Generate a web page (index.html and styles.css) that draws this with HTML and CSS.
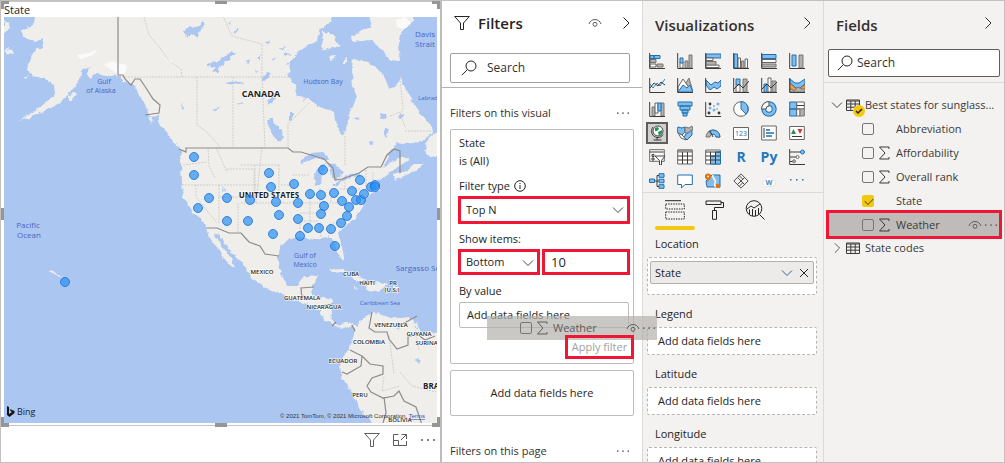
FILE: index.html
```html
<!DOCTYPE html>
<html lang="en">
<head>
<meta charset="utf-8">
<title>Report editor</title>
<link rel="stylesheet" href="styles.css">
</head>
<body>
<svg class="defs" aria-hidden="true">
  <symbol id="funnel" viewBox="0 0 16 16"><path d="M.7 1.500h14.600L9.500 8v6.500h-3V8z"/></symbol>
  <symbol id="eye" viewBox="0 0 14 10"><path d="M1 6C2 3 4.300 1.500 7 1.500S12 3 13 6"/><circle cx="7" cy="6.300" r="2"/></symbol>
  <symbol id="right" viewBox="0 0 8 14"><path d="M1.500 1.500 7 7l-5.500 5.500"/></symbol>
  <symbol id="down" viewBox="0 0 12 8"><path d="M1 1.500 6 6.500l5-5"/></symbol>
  <symbol id="search" viewBox="0 0 16 16"><circle cx="10" cy="6" r="5"/><path d="M6.300 9.700.8 15.200"/></symbol>
  <symbol id="sigma" viewBox="0 0 12 14"><path d="M11 3V1H1.500l5.500 6-5.500 6H11v-2"/></symbol>
  <symbol id="dots" viewBox="0 0 16 4"><g fill="currentColor" stroke="none"><circle cx="2" cy="2" r="1"/><circle cx="8" cy="2" r="1"/><circle cx="14" cy="2" r="1"/></g></symbol>
  <symbol id="table" viewBox="0 0 14 12"><path d="M.5 1h13v10.500H.5zM.5 2h13M.5 5h13M.5 8.200h13M4.800 2v9.500M9.200 2v9.500"/></symbol>
</svg>

<div class="app">
  <main class="canvas">
    <section class="visual">
      <h1 class="visual-title">State</h1>
      <svg class="map" viewBox="4 17 433 406" preserveAspectRatio="xMidYMid slice" role="img" aria-label="Map of states">
        <defs>
          <filter id="rough" x="-5%" y="-5%" width="110%" height="110%">
            <feTurbulence type="fractalNoise" baseFrequency=".18" numOctaves="3" seed="4" result="n"/>
            <feDisplacementMap in="SourceGraphic" in2="n" scale="5" xChannelSelector="R" yChannelSelector="G"/>
          </filter>
        </defs>
        <rect class="sea" x="4" y="17" width="433" height="406"/>
        <g class="land" filter="url(#rough)">
          <path d="M38 0 34 24 21 31 24 38 35 42 44 39 42 47 35 50 30 58 28 64 27 70 33 76 43 78 50 82 54 86 55 94 44 104 30 114 20 120 29 117 43 112 58 104 68 96 71 90 80 80 81 71 90 67 86 74 90 78 97 73 105 75 118 76 124 81 134 86 140 97 146 106 150 117 158 116 161 126 167 132 172 139 180 144 184 149 181 154 181 165 182 183 183 197 188 206 193 213 202 219 207 228 210 238 216 247 221 255 232 267 235 267 231 258 225 250 219 243 213 233 219 235 225 243 231 252 243 263 250 277 263 287 280 293 295 300 312 306 320 310 323 318 335 327 348 328 353 325 355 330 353 337 348 350 343 357 340 367 342 377 352 393 360 410 367 417 378 430 460 430 460 334 420 332 417 323 410 318 400 319 387 317 377 313 373 312 363 318 358 325 353 323 345 322 337 325 332 318 330 307 333 300 323 298 312 295 313 287 318 275 303 277 297 285 287 285 281 274 278 257 280 247 290 238 307 238 313 240 327 237 333 240 338 253 342 261 344 257 341 240 338 233 347 225 357 217 362 208 363 202 372 193 380 189 379 181 385 176 393 170 401 165 410 159 403 157 389 163 383 168 388 156 396 143 405 144 420 142 433 133 432 127 423 117 413 102 406 90 401 78 395 87 389 89 383 74 370 63 353 58 352 70 353 87 357 97 350 110 348 123 343 135 337 126 335 112 320 107 307 98 298 97 295 85 289 77 290 63 300 50 317 40 320 30 330 23 336 0z"/>
          <path d="M372 0 370 27 352 36 353 42 370 40 383 50 389 60 400 61 398 45 400 35 412 22 412 0z"/>
          <path d="M322 50 323 30 333 36 341 48 331 47 324 51zM329 57l7-3-1 5-5 2zM344 60l2-1v5h-2zM4 20l5 2 1 7-6 4zM5 49l8 1 2 4-8-1zM22 76l6 0-2 3zM68 97l6-5 3 3-5 5-4 0zM148 118l5-1-1 7zM167 134l8 3 8 10 2 5-10-8zM394 175l12-4 9-8 8 0-6 7-17 8-5 2zM425 150l3-11 8-6 8 0 0 23-12 0-5-1zM48 271l6 1 9 5-1 1-13-6zM328 270l12-2 15 6 11 7-9 0-13-8-12-1zM367 285l10-3 10 3-9 7-12-1zM352 287l7 1-6 1zM393 287l6 0v2h-6z"/>
        </g>
        <g class="water" filter="url(#rough)">
          <path d="M183 31l7-5 6 2 7-6 3 2-6 6-2 7-6-3-6 4-1-4zM207 64l8-2 10-6 6-5 4 2-6 7-7 5-5 7-4 1 3-6-9-1zM267 120l5-3 3 6 7 8 1 8-6 3-6-10zM290 113l3 0 0 6-3 3zM225 83l12-2 7 2-12 2zM180 102l5 6-1 3zM300 162l11-9 12-1 7 7-7 1-7-2-8 3-6 2zM314 174l5-8 6-2-3 8-1 13-6 1zM326 163l9 1 8 8-6 7-5-1-1-8zM332 186l14-10 2 1-12 9zM347 176l12-3 1 3-11 2zM380 113l5 1 1 4-5 1zM385 129l4 1-3 8-2-4zM353 118l7-1-2 3zM398 116l6-1-3 4zM370 141l5 1-4 3zM262 80l6-8 2 1-5 8zM270 98l7-5-4 8-6 5zM305 97l2 1-3 3zM338 104l5-2-1 4zM222 187l3 3-1 3zM415 358l4 2 1 4-4-2zM414 317l1 8 3 6-3-3zM395 328l6-1-3 4zM256 58l5-4-2 6zM279 47l7 1-5 3zM284 54l7-1-5 3zM233 30l5-1-4 5zM211 110l8-2-3 3zM237 104l6-2-3 3zM250 97l3-3-1 4zM266 42l4-3-2 6zM272 58l4-1-3 4zM255 70l4 1-3 2zM286 64l4-2-2 4zM246 62l4-3-1 4zM227 24l4-2-2 4z"/>
        </g>
        <path class="snow" d="M104 65l8-4 6 2 9 2-2 9-7 1-6-5zM396 20l9-3 6 6-7 6-7-2zM77 55l12-2 9-4-5 6-12 4zM165 58l6 2 2 4-5-3z"/>
        <g class="borders">
          <path class="admin" d="M119 77h170M144 17l5 18 12 14 8 12 12 8 1 8M197 77v48l9 6 14 16M233 77v70M262 77l3 70M262 77V44l-30-8-9-20M288 147v-23l22-22M345 136v30M400 78l3 30-3 7M390 116l10-4 5 15M405 131h27M183 165l24-3M208 147l1 19 6 12M182 185h78M196 185v12l21 26M219 185v38M241 165h38M255 165v38M238 203v30M216 147l5 12 6 13M227 169h27v28h-36M241 203h38M279 165v38h17M262 147l-6 56M281 185h15M292 175h18M296 203h42M300 213h20M310 189v36M320 188v20M331 188v15M331 223l-3 16M320 223l1 14M300 238v-17h18M333 223h14M340 189h20M345 176v13M366 170v22M373 172v13M389 336l5 38M400 372l12 14 24 6M415 330l4 20M384 377l-2 14 18-5"/>
          <path class="state" d="M118 17v58l5 0 2 4 6 6 4-6h5l8 12 5 8 7 6-1 8-14 2M179 149l7 3v-4h102l5 4 8 0 10 3 13 4 9 9 2 12 7-1 17-6 9-6h13l6-12 7-6 6 2 0 22M207 228l10 0 12 5h12l8 9 11 4 5 8 14 2M302 300l-1-12 13-1M301 295l10 4M313 307l20-3M332 326l4-4M355 331l-3-6M372 312l-3 16 6 4 12 0 2 7 8 10 11-4 0-8 9-3 8 6 10-4M399 326l18-10M350 350l12 6-1 10-14 8-5-2M362 356l8 8 13 2 0 8-11 4-5 8 4 6 12 6 11-2 5-5 5 10 12 6 4 12 4 12M384 397l2 16-3 10"/>
        </g>
        <g class="sea-label">
          <text x="104" y="84">Gulf</text><text x="101" y="93">of Alaska</text>
          <text x="323" y="84">Hudson Bay</text><text x="425" y="37" class="wide">Davis</text><text x="425" y="47" class="wide">Strait</text>
          <text x="431" y="100" class="tiny">Labrador</text>
          <text x="28" y="228" class="wide">Pacific</text><text x="29" y="238" class="wide">Ocean</text>
          <text x="305" y="258">Gulf of</text><text x="305" y="267">Mexico</text>
          <text x="420" y="271" class="wide">Sargasso Sea</text><text x="380" y="305" class="tiny">Caribbean Sea</text>
        </g>
        <g class="country">
          <text x="261" y="97" class="large">CANADA</text><text x="269" y="198">UNITED STATES</text>
          <text x="262" y="274" class="small">MEXICO</text><text x="351" y="276" class="small">CUBA</text>
          <text x="367" y="285" class="small">HAITI</text><text x="393" y="285" class="small">PR</text><text x="392" y="292" class="small">(U.S.)</text>
          <text x="302" y="300" class="small">GUATEMALA</text><text x="324" y="309" class="small">NICARAGUA</text>
          <text x="391" y="327" class="small">VENEZUELA</text><text x="419" y="336" class="small">GUYANA</text>
          <text x="431" y="345" class="small">SURINAME</text><text x="369" y="344" class="small">COLOMBIA</text>
          <text x="343" y="363" class="small">ECUADOR</text><text x="437" y="389">BRAZIL</text>
          <text x="360" y="397" class="small">PERU</text><text x="400" y="422" class="small">BOLIVIA</text>
        </g>
        <g class="points">
          <circle cx="194" cy="157" r="4.500"/><circle cx="194" cy="175" r="4.500"/><circle cx="209" cy="198" r="4.500"/><circle cx="198" cy="208" r="4.500"/><circle cx="227" cy="198" r="4.500"/><circle cx="250" cy="200" r="4.500"/><circle cx="227" cy="221" r="4.500"/><circle cx="248" cy="221" r="4.500"/><circle cx="269" cy="173" r="4.500"/><circle cx="271" cy="187" r="4.500"/><circle cx="276" cy="202" r="4.500"/><circle cx="279" cy="215" r="4.500"/><circle cx="273" cy="234" r="4.500"/><circle cx="294" cy="184" r="4.500"/><circle cx="298" cy="203" r="4.500"/><circle cx="298" cy="219" r="4.500"/><circle cx="300" cy="236" r="4.500"/><circle cx="310" cy="194" r="4.500"/><circle cx="321" cy="195" r="4.500"/><circle cx="323" cy="170" r="4.500"/><circle cx="324" cy="206" r="4.500"/><circle cx="321" cy="214" r="4.500"/><circle cx="308" cy="228" r="4.500"/><circle cx="319" cy="228" r="4.500"/><circle cx="331" cy="229" r="4.500"/><circle cx="335" cy="246" r="4.500"/><circle cx="334" cy="193" r="4.500"/><circle cx="342" cy="201" r="4.500"/><circle cx="341" cy="223" r="4.500"/><circle cx="347" cy="216" r="4.500"/><circle cx="349" cy="207" r="4.500"/><circle cx="352" cy="191" r="4.500"/><circle cx="356" cy="200" r="4.500"/><circle cx="361" cy="200" r="4.500"/><circle cx="364" cy="194" r="4.500"/><circle cx="360" cy="180" r="4.500"/><circle cx="371" cy="187" r="4.500"/><circle cx="375" cy="185" r="4.500"/><circle cx="375" cy="187" r="4.500"/><circle cx="65" cy="282" r="4.500"/>
        </g>
        <path class="bing-mark" d="M7 406l2 1v7l3-2-1.500-1-1-2 5 2v2l-5 4-2.500-2z"/>
        <text class="bing" x="17" y="415">Bing</text>
        <text class="credit" x="280" y="418">© 2021 TomTom, © 2021 Microsoft Corporation, <tspan class="terms">Terms</tspan></text>
      </svg>
      <i class="grip top left"></i><i class="grip top mid"></i><i class="grip top right"></i>
      <i class="grip side left"></i><i class="grip side right"></i>
      <i class="grip bottom left"></i><i class="grip bottom mid"></i><i class="grip bottom right"></i>
    </section>
    <div class="visual-tools">
      <button class="icon-btn" aria-label="Filters"><svg class="i16"><use href="#funnel"/></svg></button>
      <button class="icon-btn" aria-label="Focus mode"><svg class="i16" viewBox="0 0 16 16"><path d="M6.500 2.500h-5v11h13V9M1.500 8.500h5v5M9.500 2.500h5V7M14.500 2.500 9 8"/></svg></button>
      <button class="icon-btn" aria-label="More options"><svg class="more"><use href="#dots"/></svg></button>
    </div>
  </main>

  <aside class="filters">
    <header class="filters-head">
      <svg class="i16"><use href="#funnel"/></svg>
      <h2>Filters</h2>
      <button class="icon-btn" aria-label="Show or hide"><svg class="eye"><use href="#eye"/></svg></button>
      <button class="icon-btn" aria-label="Collapse filters"><svg class="chev-r"><use href="#right"/></svg></button>
    </header>
    <label class="search"><svg class="i16"><use href="#search"/></svg><input type="text" placeholder="Search" aria-label="Search filters"></label>
    <div class="filters-body">
      <div class="section-head"><h3>Filters on this visual</h3><button class="icon-btn" aria-label="More"><svg class="dots"><use href="#dots"/></svg></button></div>
      <div class="card">
        <div class="card-title">State<br>is (All)</div>
        <label class="row-label" for="ftype">Filter type <svg class="info" viewBox="0 0 12 12"><circle cx="6" cy="6" r="5.300"/><path d="M6 5v4M6 3v1"/></svg></label>
        <div class="marked pick"><select id="ftype"><option>Top N</option></select><svg class="chev-d"><use href="#down"/></svg></div>
        <label class="row-label" for="show">Show items:</label>
        <div class="pair">
          <div class="marked pick"><select id="show"><option>Bottom</option></select><svg class="chev-d"><use href="#down"/></svg></div>
          <div class="marked"><input type="text" value="10" aria-label="Number of items"></div>
        </div>
        <div class="row-label">By value</div>
        <div class="drop">Add data fields here</div>
        <div class="marked apply"><button disabled>Apply filter</button></div>
      </div>
      <div class="card empty">Add data fields here</div>
      <div class="section-head next"><h3>Filters on this page</h3><button class="icon-btn" aria-label="More"><svg class="dots"><use href="#dots"/></svg></button></div>
    </div>
  </aside>

  <aside class="vis">
    <header class="pane-head"><h2>Visualizations</h2><button class="icon-btn" aria-label="Collapse visualizations"><svg class="chev-r"><use href="#right"/></svg></button></header>
    <div class="gallery">
      <button aria-label="Stacked bar"><svg viewBox="0 0 16 16"><path class="b" d="M1 2.500h4v3H1zM5 2.500h6v3H5z"/><path class="g" d="M1 6.500h6v3H1zM8 11h6v3H8z"/><path class="w" d="M1 11h6v3H1z"/><path class="k" d="M.7 0v15.500H16"/></svg></button>
      <button aria-label="Stacked column"><svg viewBox="0 0 16 16"><path class="w" d="M3 9h3v6H3z"/><path class="b" d="M3 5h3v5H3z"/><path class="g" d="M8 8h3v7H8zM12 2h3v13h-3z"/><path class="k" d="M.7 0v15.500H16"/></svg></button>
      <button aria-label="Clustered bar"><svg viewBox="0 0 16 16"><path class="b" d="M1 1h15v4H1z"/><path class="w" d="M1 5h7v2.500H1zM1 12h13v2.500H1z"/><path class="g" d="M1 8.500h10V12H1z"/><path class="k" d="M.7 0v15.500H16"/></svg></button>
      <button aria-label="Clustered column"><svg viewBox="0 0 16 16"><path class="b" d="M1 1h3.500v14H1z"/><path class="w" d="M5 5h2.500v10H5zM12 6h2.500v9H12z"/><path class="g" d="M8.500 8H11v7H8.500z"/><path class="k" d="M.7 0v15.500H16"/></svg></button>
      <button aria-label="100% stacked bar"><svg viewBox="0 0 16 16"><path class="b" d="M1 1.500h14v4H1z"/><path class="w" d="M1 6.500h14v3H1z"/><path class="g" d="M1 11h14v3H1z"/><path class="k" d="M.7 0v15.500H16"/></svg></button>
      <button aria-label="100% stacked column"><svg viewBox="0 0 16 16"><path class="b" d="M3 2h4v11H3z"/><path class="g" d="M10 2h4v13h-4z"/><path class="k" d="M.7 0v15.500H16"/></svg></button>

      <button aria-label="Line"><svg viewBox="0 0 16 16"><path class="bl" d="M1 7l3 4 4-5 3 3 5-7"/><path class="k" d="M1 11l4-5 4 3 3-4 4 3M.7 1v14.500H16"/></svg></button>
      <button aria-label="Area"><svg viewBox="0 0 16 16"><path class="g" d="M7 9l5-8 4 14H9z"/><path class="w" d="M1 10l5-8 9 13H1z"/><path class="b" d="M1 15l5-7 4 3 3-3 3 7z"/><path class="k" d="M.7 1v14.500H16"/></svg></button>
      <button aria-label="Stacked area"><svg viewBox="0 0 16 16"><path class="b" d="M1 3l5 5 4-3 3 1 3-3v6l-4 3-3-2-4 3-4-5z"/><path class="k" d="M.7 1v14.500H16"/></svg></button>
      <button aria-label="Line and stacked column"><svg viewBox="0 0 16 16"><path class="b" d="M3 2h4v6H3z"/><path class="w" d="M3 8h4v7H3z"/><path class="g" d="M10 2h4v13h-4z"/><path class="k" d="M1 12l5-5 4 4 6-7M.7 1v14.500H16"/></svg></button>
      <button aria-label="Line and clustered column"><svg viewBox="0 0 16 16"><path class="b" d="M3 7h3v8H3z"/><path class="w" d="M7 1h3v14H7z"/><path class="g" d="M11 4h4v11h-4z"/><path class="k" d="M1 12l5-5 4 4 6-6M.7 1v14.500H16"/></svg></button>
      <button aria-label="Ribbon"><svg viewBox="0 0 16 16"><path class="o" d="M1 7h3l4 6h3l4-5h1v6H1z"/><path class="b" d="M1 2l5 4h4l6-4v5l-5 4H7L1 6z"/><path class="g" d="M1 11l4 3 4-4 3 2 4 0v3H1z"/><path class="k" d="M.7 1v14.500H16"/></svg></button>

      <button aria-label="Waterfall"><svg viewBox="0 0 16 16"><path class="g" d="M3 6h3v9H3zM12 2h3v13h-3z"/><path class="w" d="M6 2h3v10H6z"/><path class="b" d="M9 2h3v8H9z"/><path class="k" d="M.7 1v14.500H16"/></svg></button>
      <button aria-label="Funnel"><svg viewBox="0 0 16 16"><path class="b" d="M1 1h14v4H1zM3 5h10v4H3zM5 9h6v3H5zM6 12h4v3H6z"/></svg></button>
      <button aria-label="Scatter"><svg viewBox="0 0 16 16"><g fill="#71b1e6"><circle cx="5" cy="7" r="1.500"/><circle cx="9" cy="9" r="1.500"/><circle cx="13" cy="3" r="1.500"/></g><g fill="#3b3a39"><circle cx="5" cy="3" r="1.400"/><circle cx="4" cy="12" r="1.400"/><circle cx="14" cy="12" r="1.400"/></g><g fill="#aaa"><circle cx="9" cy="5" r="1"/><circle cx="12" cy="8" r="1"/></g><path class="k" d="M.7 1v14.500H16"/></svg></button>
      <button aria-label="Pie"><svg viewBox="0 0 16 16"><circle class="w" cx="8" cy="8" r="7.300"/><path class="b" d="M8 .7A7.300 7.300 0 0 1 13 13.200L8 8z"/></svg></button>
      <button aria-label="Donut"><svg viewBox="0 0 16 16"><circle cx="8" cy="8" r="5.200" fill="none" stroke="#1f70b0" stroke-width="5"/><circle cx="8" cy="8" r="5.200" fill="none" stroke="#83bdeb" stroke-width="3"/><path d="M8 .5A7.500 7.500 0 0 0 .5 8H5a3 3 0 0 1 3-3z" fill="#f8f8f8" stroke="#555"/></svg></button>
      <button aria-label="Treemap"><svg viewBox="0 0 16 16"><path class="b" d="M.7 1h7v7h-7zM.7 8h7v7h-7z"/><path class="w" d="M7.700 1h7.600v7H7.700zM7.700 8H11v7H7.700z"/><path class="g" d="M11 8h4.300v7H11z"/><path class="k" d="M8 4.500h7"/></svg></button>

      <button class="on" aria-label="Map"><svg viewBox="0 0 16 16"><path class="k" d="M4 2C1 6 3 12 8 12.500c3 .3 5-1 6-3M8 12.500V15M4.500 15h8"/><circle cx="9" cy="6" r="5" fill="#fff" stroke="#444"/><path d="M6 3l3-1 1 2-2 2-2 0zM9 7l4-2v3l-3 3z" fill="#189a55"/></svg></button>
      <button aria-label="Filled map"><svg viewBox="0 0 16 16"><path class="b" d="M1 2l4 1 3-1v5l-3 3-4-2-1-4zM9 9l6-4v5l-5 5-3-3z"/><path class="g" d="M8 2l4 1 3-2 1 3-5 4-3 0z"/><path class="w" d="M1 8l4 2 2 2 2 3-5-2z"/></svg></button>
      <button aria-label="Gauge"><svg viewBox="0 0 16 16"><path class="g" d="M1 12a7 7 0 0 1 14 0h-4a3 3 0 0 0-6 0z"/><path class="b" d="M4 6.300A7 7 0 0 1 15 12h-4a3 3 0 0 0-4-2.500z"/><path class="k" d="M8 12 5 6"/></svg></button>
      <button aria-label="Card"><svg viewBox="0 0 16 16"><path class="w" d="M.5 2.500h15v12H.5z"/><text x="2" y="11" class="num">123</text></svg></button>
      <button aria-label="Multi-row card"><svg viewBox="0 0 16 16"><path class="w" d="M.7 1h14.600v14H.7z"/><path class="k" d="M3 3v10"/><path d="M5 5h4M5 8h8M5 11h6" stroke="#1f70b0" stroke-width="1.500"/></svg></button>
      <button aria-label="KPI"><svg viewBox="0 0 16 16"><path class="w" d="M.7 1.500h14.600v13H.7z"/><path d="M2 9l2.500-5L7 9z" fill="#2d8a57"/><path d="M8.500 4h5L11 9z" fill="#d33"/><path class="k" d="M3 11.500h10"/></svg></button>

      <button aria-label="Slicer"><svg viewBox="0 0 16 16"><path class="w" d="M.7.700h14.600v11.600H.7z"/><path class="k" d="M.7 3h14M3 5.500h2v2H3zM3 9h2v2H3z"/><path d="M6 7h10l-3.500 4.500V16h-2v-4.500z" fill="#fff" stroke="#444"/></svg></button>
      <button aria-label="Table"><svg viewBox="0 0 16 16"><path class="w" d="M.7 1h14.600v14H.7z"/><path class="g" d="M.7 1h14.600v2H.7z"/><path class="k" d="M.7 7h14.600M.7 11h14.600M5.500 3v12M10.500 3v12"/></svg></button>
      <button aria-label="Matrix"><svg viewBox="0 0 16 16"><path class="w" d="M.7 1h14.600v14H.7z"/><path class="b" d="M10.500 3h5v12H5.500V7h5z"/><path class="k" d="M.7 3h14.600M.7 7h14.600M.7 11h14.600M5.500 3v12M10.500 3v12"/></svg></button>
      <button class="txt">R</button>
      <button class="txt">Py</button>
      <button aria-label="Key influencers"><svg viewBox="0 0 16 16"><path class="k" d="M.7 0v15.500H16M1 3h11M1 8h6M1 12.500h3"/><circle class="b" cx="13.500" cy="3" r="2"/><circle class="w" cx="8.500" cy="8" r="1.500"/><circle class="g" cx="5" cy="12.300" r="1.500"/></svg></button>

      <button aria-label="Decomposition tree"><svg viewBox="0 0 16 16"><path class="k" d="M4 8h6M8 2.500v11M8 2.500h2M8 13.500h2"/><path class="b" d="M.5 6h5v3.500h-5zM10 .7h5v3.600h-5zM10 6.200h5v3.600h-5zM10 11.700h5v3.600h-5z"/></svg></button>
      <button aria-label="Q&amp;A"><svg viewBox="0 0 16 16"><path d="M.7 2h14.600v9.500H8L4.500 15v-3.500H.7z" fill="#fff" stroke="#1f70b0"/></svg></button>
      <button aria-label="ArcGIS"><svg viewBox="0 0 16 16"><path class="b" d="M1 8l6-6 8 0v12H2z"/><path d="M8 2c-1 5 4 4 2 8s2 3 3 6" fill="none" stroke="#fff" stroke-width="1.500"/><path d="M1 5h4l-2 4z" fill="#df7010"/><circle cx="3" cy="3.500" r="2" fill="#fff" stroke="#df7010" stroke-width="2.200"/><circle cx="13" cy="13" r="2.300" fill="#df7010"/></svg></button>
      <button aria-label="Power Apps"><svg viewBox="0 0 18 18"><path class="k" d="M9 1 17 9 9 17 1 9zM5 5l8 8M13 5l-8 8M7 3l4 4M7 15l4-4"/></svg></button>
      <button aria-label="Word cloud"><svg viewBox="0 0 18 16"><path d="M4.500 14a4 4 0 0 1-.5-7 5 5 0 0 1 9.500-.5A4 4 0 0 1 14 14z" fill="#fff" stroke="#e0e0e0"/><text x="5" y="12.500" class="cloud">W</text></svg></button>
      <button aria-label="More visuals"><svg viewBox="0 0 16 16"><g fill="#3a6fa5"><path d="M1 6h1.500v1.500H1zM7 6h1.500v1.500H7zM13 6h1.500v1.500H13z"/></g></svg></button>
    </div>
    <div class="tabs">
      <button class="tab active" aria-label="Fields"><svg viewBox="0 0 20 20"><path d="M0 .7h16"/><path d="M.7 4h18.600v5H.7zM.7 12h18.600v7H.7z" stroke-dasharray="1.500 1"/></svg></button>
      <button class="tab" aria-label="Format"><svg viewBox="0 0 20 20"><path d="M1 1h15v3.500H1zM16 2.500h2.500v5h-9v3M7.500 10.500h4v8.800h-4z"/></svg></button>
      <button class="tab" aria-label="Analytics"><svg viewBox="0 0 20 20"><circle cx="9" cy="8.500" r="7.800"/><path d="M2 9l4-3 3 2 6-4M4.500 9.500v5M7.500 9v7M10.500 10v6M13.500 8v6M14.500 14.500l5 5"/></svg></button>
    </div>
    <div class="wells">
      <h3>Location</h3>
      <div class="well full"><div class="chip"><span>State</span><button class="icon-btn" aria-label="Options"><svg class="chev-d"><use href="#down"/></svg></button><button class="icon-btn" aria-label="Remove"><svg class="close" viewBox="0 0 10 10"><path d="M1 1l8 8M9 1 1 9"/></svg></button></div></div>
      <h3>Legend</h3><div class="well">Add data fields here</div>
      <h3>Latitude</h3><div class="well">Add data fields here</div>
      <h3>Longitude</h3><div class="well">Add data fields here</div>
    </div>
  </aside>

  <aside class="fields">
    <header class="pane-head"><h2>Fields</h2><button class="icon-btn" aria-label="Collapse fields"><svg class="chev-r"><use href="#right"/></svg></button></header>
    <label class="search"><svg class="i16"><use href="#search"/></svg><input type="text" placeholder="Search" aria-label="Search fields"></label>
    <div class="tree">
      <div class="node"><svg class="chev-d"><use href="#down"/></svg><span class="table-wrap"><svg class="table-icon"><use href="#table"/></svg><svg class="badge" viewBox="0 0 12 12"><circle cx="6" cy="6" r="6"/><path d="M3 6l2 2 4-4"/></svg></span><span>Best states for sunglass...</span></div>
      <label class="field"><input type="checkbox"><i class="kind"></i><span>Abbreviation</span></label>
      <label class="field"><input type="checkbox"><svg class="kind"><use href="#sigma"/></svg><span>Affordability</span></label>
      <label class="field"><input type="checkbox"><svg class="kind"><use href="#sigma"/></svg><span>Overall rank</span></label>
      <label class="field"><input type="checkbox" checked><i class="kind"></i><span>State</span></label>
      <div class="hot"><label class="field"><input type="checkbox"><svg class="kind"><use href="#sigma"/></svg><span>Weather</span></label><svg class="eye"><use href="#eye"/></svg><svg class="dots"><use href="#dots"/></svg></div>
      <div class="node"><svg class="chev-d closed"><use href="#right"/></svg><span class="table-wrap"><svg class="table-icon"><use href="#table"/></svg></span><span>State codes</span></div>
    </div>
  </aside>

  <div class="ghost"><input type="checkbox" aria-label="Weather"><svg class="kind"><use href="#sigma"/></svg><span>Weather</span><svg class="eye"><use href="#eye"/></svg><svg class="dots"><use href="#dots"/></svg></div>
</div>
</body>
</html>
```

FILE: styles.css
```css
* { box-sizing: border-box; margin: 0; padding: 0; }
body { font: 11px/18px "Open Sans", "Noto Sans", sans-serif; color: #252423; background: #fff; }
.defs { position: absolute; width: 0; height: 0; }
svg { fill: none; stroke: currentColor; flex: none; }
button, input, select { font: inherit; color: inherit; background: none; border: 0; }
button { display: flex; align-items: center; justify-content: center; }
input { outline: 0; min-width: 0; }
h2 { font-size: 15px; line-height: 20px; font-weight: 600; flex: 1; }
h3 { font-size: 11px; line-height: 18px; font-weight: 400; flex: 1; }

.app { position: relative; display: flex; height: 100vh; overflow: hidden; border: 1px solid #c2c1c0; }
.i16 { width: 16px; height: 16px; }
.eye { width: 14px; height: 10px; color: #605e5c; }
.chev-r { width: 8px; height: 14px; }
.chev-d { width: 12px; height: 8px; color: #484644; }
.dots { width: 14px; height: 4px; color: #605e5c; }
.more { width: 16px; height: 4px; }

/* Report canvas */
.canvas { flex: 1; min-width: 0; display: flex; flex-direction: column; border-right: 2px solid #bdbcbb; }
.visual { position: relative; flex: 1; min-height: 0; display: flex; flex-direction: column; padding: 0 3px 2px 3px; border-top: 1px solid #c8c8c8; border-bottom: 1px solid #c4c4c4; }
.visual-title { font-size: 11px; line-height: 15px; font-weight: 400; }
.map { flex: 1; min-height: 0; width: 100%; stroke: none; }
.visual-tools { height: 36px; display: flex; justify-content: flex-end; align-items: center; gap: 12px; padding: 0 4px 8px 0; color: #605e5c; }
.grip { position: absolute; background: #969696; width: 10px; height: 3px; }
.grip.top { top: -1px; }
.grip.bottom { bottom: -2px; height: 4px; }
.grip.left { left: 0; }
.grip.right { right: 0; }
.grip.mid { left: 50%; width: 12px; margin-left: -6px; }
.grip.side { top: 50%; width: 3px; height: 12px; margin-top: -6px; }
.grip.top.left, .grip.top.right { border: solid #969696; border-width: 3px 0 0 3px; background: none; width: 8px; height: 8px; }
.grip.top.right { border-width: 3px 3px 0 0; }
.grip.bottom.left, .grip.bottom.right { border: solid #969696; border-width: 0 0 4px 3px; background: none; width: 8px; height: 10px; }
.grip.bottom.right { border-width: 0 3px 4px 0; }

.sea, .water { fill: #abc6f1; }
.land { fill: #efeeeb; }
.snow { fill: #fafafa; }
.borders { fill: none; }
.admin { stroke: #c4c2bf; stroke-width: .7; stroke-dasharray: 2 1; }
.state { stroke: #8f8b88; stroke-width: 1.2; }
.map text { text-anchor: middle; font-size: 7px; }
.map .wide { font-size: 8px; }
.sea-label { fill: #4767c5; }
.map .tiny { font-size: 6px; }
.country { fill: #222; font-weight: 700; stroke: #fff; stroke-width: 1; paint-order: stroke; }
.map .country text { font-size: 8px; }
.map .country .large { font-size: 9px; }
.map .country .small { font-size: 6px; font-weight: 600; }
.points { fill: #2991f5; fill-opacity: .7; stroke: #1b6fd8; stroke-opacity: .8; stroke-width: 1; }
.bing-mark { fill: #111; }
.map .bing { fill: #222; font-size: 9px; text-anchor: start; }
.map .credit { fill: #333; font: 6px "Liberation Sans", sans-serif; text-anchor: start; }
.terms { fill: #3551b0; text-decoration: underline; }

/* Filters pane */
.filters { width: 201px; border-right: 1px solid #dcdad8; display: flex; flex-direction: column; overflow: hidden; }
.filters-head { display: flex; align-items: center; gap: 8px; height: 44px; padding: 0 12px; flex: none; }
.filters-head .icon-btn + .icon-btn { margin-left: 12px; }
.search { display: flex; align-items: center; border: 1px solid #a19f9d; border-radius: 2px; background: #fff; }
.search input { flex: 1; font-size: 12px; }
.search input::placeholder { color: #323130; opacity: 1; }
.filters .search { height: 30px; margin: 8px 12px 4px 8px; padding-left: 10px; gap: 10px; flex: none; }
.filters-body { border-top: 1px solid #b3b0ad; padding: 16px 8px 0; flex: none; }
.section-head { display: flex; align-items: center; justify-content: space-between; height: 18px; padding-right: 4px; margin-bottom: 7px; color: #323130; }
.section-head.next { margin-top: 26px; }
.card { border: 1px solid #bebbb8; border-radius: 2px; padding: 4px 4px 4px 8px; }
.row-label { display: flex; align-items: center; gap: 4px; }
.card-title { margin-bottom: 7px; }
.info { width: 12px; height: 12px; }
.marked { border: 3px solid #f01735; position: relative; z-index: 2; }
.pick { display: flex; align-items: center; }
.pick select { appearance: none; width: 100%; height: 22px; padding: 0 5px; outline: 0; }
.pick .chev-d { position: absolute; right: 3px; top: 7px; pointer-events: none; }
.card > .pick { width: 172px; margin: 1px 0 6px -1px; }
.pair { display: grid; grid-template-columns: 82px 88px; gap: 2px; margin: 1px 0 7px -1px; }
.pair select, .pair input { height: 20px; }
.pair input { width: 100%; padding: 0 6px; font-size: 13px; }
.drop { border: 1px solid #bebbb8; border-radius: 2px; height: 26px; line-height: 24px; padding-left: 7px; width: 170px; margin-top: 2px; }
.apply { width: 69px; margin: 7px -5px 0 auto; }
.apply button { width: 100%; height: 18px; color: #a19f9d; white-space: nowrap; }
.card.empty { margin-top: 6px; height: 46px; display: flex; align-items: center; justify-content: center; padding: 0; }

/* Shared grey panes */
.vis, .fields { background: #f3f2f1; display: flex; flex-direction: column; overflow: hidden; }
.pane-head { display: flex; align-items: center; height: 48px; padding: 0 12px; color: #323130; flex: none; }
.pane-head .icon-btn { margin-bottom: 4px; }

.vis { width: 181px; border-right: 1px solid #dcdad8; }
.gallery { display: grid; grid-template-columns: repeat(6, 22px); grid-auto-rows: 22px; gap: 2px 6px; padding: 1px 0 0 3px; border-bottom: 1px solid #dcdad8; }
.gallery svg { width: 16px; height: 16px; stroke: none; }
.gallery .on { border: 2px solid #605e5c; background: #d2d0ce; }
.gallery .txt { color: #2678bb; font-size: 14px; font-weight: 700; }
.b { fill: #83bdeb; stroke: #1f70b0; }
.g { fill: #b3b1af; stroke: #777; }
.w { fill: #fff; stroke: #666; }
.o { fill: #f09b3c; stroke: #d87512; }
.k { stroke: #3b3a39; fill: none; }
.bl { stroke: #2b88d0; fill: none; }
.num { font-size: 7px; fill: #1f70b0; }
.cloud { font-size: 8px; font-weight: 700; fill: #4a87c0; }
.tabs { display: flex; padding-left: 12px; height: 37px; flex: none; }
.tab { position: relative; width: 40px; height: 37px; padding-bottom: 4px; }
.tab svg { width: 20px; height: 20px; }
.tab.active::after { content: ""; position: absolute; left: 0; right: 0; bottom: 0; height: 4px; border-radius: 2px; background: #f2c811; }
.wells { padding: 5px 6px 0 4px; }
.wells h3 { padding-left: 8px; }
.well { border: 1px dashed #b8b5b2; border-radius: 2px; background: #fff; height: 28px; line-height: 26px; padding-left: 10px; margin: 4px 0 10px; }
.well.full { height: 38px; padding: 3px 2px; }
.chip { display: flex; align-items: center; gap: 6px; border: 1px solid #b3b0ad; border-radius: 2px; background: #edebe9; height: 23px; padding: 0 4px; }
.chip span { flex: 1; }
.chip .chev-d { color: #33668f; }
.close { width: 10px; height: 10px; }

/* Fields pane */
.fields { width: 180px; }
.fields .search { height: 28px; margin: 0 4px 0; padding-left: 8px; gap: 4px; border-color: #605e5c; flex: none; }
.tree { margin-top: 5px; padding-top: 10px; border-top: 1px solid #dcdad8; color: #3b3a39; }
.node { display: flex; align-items: center; height: 24px; padding-left: 7px; gap: 3px; white-space: nowrap; }
.closed { height: 12px; }
.table-wrap { position: relative; display: flex; margin-right: 2px; }
.table-icon { width: 14px; height: 12px; }
.badge { position: absolute; left: 7px; top: 6px; width: 12px; height: 12px; fill: #f2c811; stroke: none; }
.badge path { fill: none; stroke: #252423; stroke-width: 1.5; }
.field { display: flex; align-items: center; height: 24px; padding-left: 38px; flex: 1; }
input[type="checkbox"] { appearance: none; position: relative; width: 12px; height: 12px; border: 1px solid #797775; border-radius: 2px; flex: none; }
input[type="checkbox"]:checked { border-color: #f2c811; background: #f2c811; }
input[type="checkbox"]:checked::after { content: ""; position: absolute; left: 2px; top: 2px; width: 7px; height: 4px; border: solid #6b5d17; border-width: 0 0 1px 1px; transform: rotate(-45deg); }
.kind { width: 12px; height: 14px; margin: 0 6px 0 4px; flex: none; }
.hot { display: flex; align-items: center; gap: 2px; margin: -3px 2px; height: 29px; border: 3px solid #f01735; background: #bebbb8; padding-right: 1px; position: relative; }
.hot .field { padding-left: 33px; }

/* Field being dragged */
.ghost { position: absolute; right: 347px; top: 315px; width: 170px; height: 24px; display: flex; align-items: center; padding: 0 1px 0 33px; gap: 2px; background: rgba(179, 176, 173, .7); color: #605e5c; z-index: 1; }
.ghost .kind { margin: 0 3px 0 2px; }
.ghost span { flex: 1; }
```
